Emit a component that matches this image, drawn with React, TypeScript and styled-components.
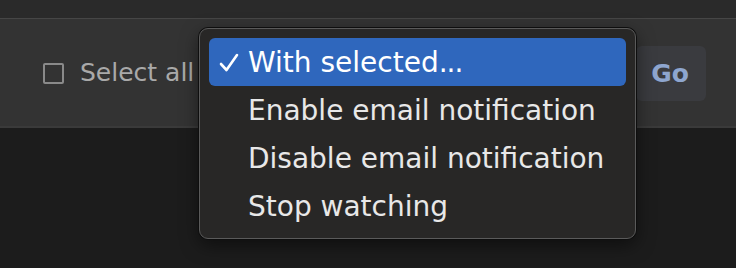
import React from "react";
import styled, { createGlobalStyle } from "styled-components";

const Global = createGlobalStyle`
  html, body { margin: 0; padding: 0; background: #1c1c1c; }
  body { font-family: "DejaVu Sans", "Verdana", sans-serif; }
`;

const Page = styled.div`
  width: 736px;
  height: 268px;
  background: #1c1c1c;
  position: relative;
  overflow: hidden;
`;

const TopBar = styled.div`
  height: 18px;
  background: #2a2a2a;
  border-bottom: 1px solid #464646;
`;

const Toolbar = styled.div`
  height: 107px;
  background: #333333;
  border-bottom: 2px solid #3a3a3a;
  display: flex;
  align-items: center;
  padding-left: 43px;
  padding-right: 30px;
`;

const Check = styled.span`
  width: 17px;
  height: 17px;
  border: 2px solid #8a8a8a;
  border-radius: 2px;
  box-sizing: content-box;
  margin-right: 16px;
  margin-top: 1px;
`;

const Label = styled.span`
  font-size: 25px;
  color: #a9a9a9;
  white-space: nowrap;
`;

const SelectWrap = styled.div`
  position: relative;
  flex: 1;
  height: 100%;
`;

const GoButton = styled.button`
  width: 70px;
  height: 55px;
  margin-top: 1px;
  border: none;
  border-radius: 6px;
  background: #3a3b3f;
  color: #8ea6cf;
  font-family: "DejaVu Sans", sans-serif;
  font-weight: bold;
  font-size: 25px;
  padding: 0 2px 0 0;
  flex-shrink: 0;
`;

const Menu = styled.ul`
  position: absolute;
  left: 199px;
  top: 28px;
  width: 437px;
  height: 211px;
  margin: 0;
  padding: 9px 9px;
  box-sizing: border-box;
  list-style: none;
  background: #282726;
  border: 1px solid #5a5a5a;
  border-radius: 9px;
  box-shadow: 0 0 0 1px #0e0e0e, 0 6px 18px rgba(0, 0, 0, 0.5);
  z-index: 10;
`;

const Item = styled.li<{ $active?: boolean }>`
  height: 48px;
  display: flex;
  align-items: center;
  border-radius: 6px;
  background: ${(p) => (p.$active ? "#2f67bd" : "transparent")};
  color: ${(p) => (p.$active ? "#ffffff" : "#e8e8e8")};
  font-size: 28px;
  padding-left: 39px;
  position: relative;
  white-space: nowrap;
`;

const Dots = styled.span`
  letter-spacing: -1px;
`;

const Tick = styled.svg`
  position: absolute;
  left: 10px;
  top: 15px;
`;

export default function App() {
  return (
    <Page>
      <Global />
      <TopBar />
      <Toolbar>
        <Check />
        <Label>Select all</Label>
        <SelectWrap />
        <GoButton>Go</GoButton>
      </Toolbar>
      <Menu>
        <Item $active>
          <Tick width="20" height="20" viewBox="0 0 20 20">
            <path d="M2 11 L7.5 17 L18 2" fill="none" stroke="#ffffff" strokeWidth="2.6" strokeLinecap="round" strokeLinejoin="round" />
          </Tick>
          With selected<Dots>...</Dots>
        </Item>
        <Item>Enable email notification</Item>
        <Item>Disable email notification</Item>
        <Item>Stop watching</Item>
      </Menu>
    </Page>
  );
}
